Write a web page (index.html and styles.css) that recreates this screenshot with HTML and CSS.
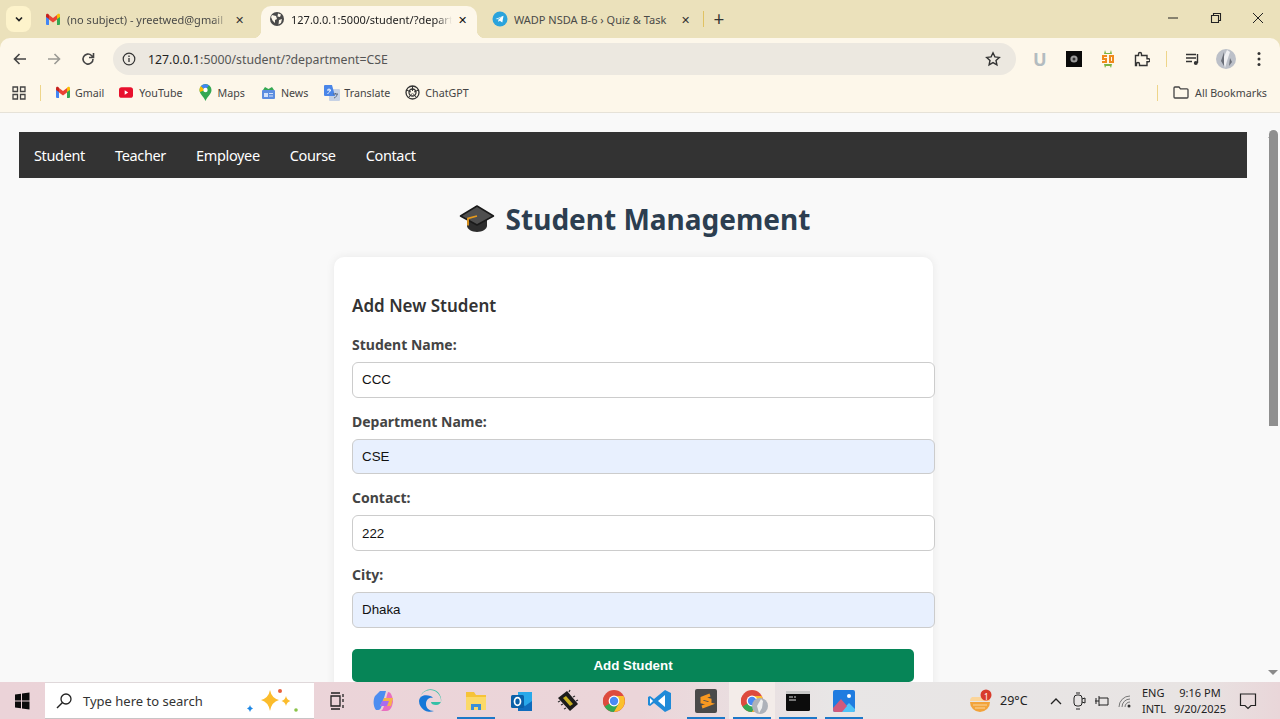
FILE: index.html
```html
<!DOCTYPE html>
<html lang="en">
<head>
<meta charset="utf-8">
<title>Student Management</title>
<link rel="stylesheet" href="styles.css">
</head>
<body>
<svg class="defs" width="0" height="0">
  <defs>
    <symbol id="gmail" viewBox="0 0 16 13">
      <path d="M1 12V3l3 2v7H2a1 1 0 0 1-1-1z" fill="#4285f4"/>
      <path d="M15 12V3l-3 2v7h2a1 1 0 0 0 1-1z" fill="#34a853"/>
      <path d="M4 6.5V2L8 5l4-3v4.5L8 9.5z" fill="#ea4335"/>
      <path d="M1 4V2.2C1 1 2.4.5 3.2 1L4 1.7V6z" fill="#c5221f"/>
      <path d="M15 4V2.2C15 1 13.6.5 12.8 1L12 1.7V6z" fill="#fbbc04"/>
    </symbol>
    <symbol id="chrome" viewBox="0 0 24 24">
      <circle cx="12" cy="12" r="11" fill="#dd4b3e"/>
      <path d="M12 12L2.5 17.5A11 11 0 0 0 12 23l5.5-9z" fill="#34a853"/>
      <path d="M12 7h9.6A11 11 0 0 1 12 23l5-9z" fill="#fbc02d"/>
      <path d="M12 12L2.5 6.5A11 11 0 0 0 2.5 17.5L7 12z" fill="#dd4b3e"/>
      <circle cx="12" cy="12" r="5.4" fill="#fff"/>
      <circle cx="12" cy="12" r="4.2" fill="#4a8af4"/>
    </symbol>
  </defs>
</svg>

<div class="tabstrip">
  <button class="tabsearch" type="button" aria-label="Search tabs">
    <svg width="10" height="10" viewBox="0 0 10 10"><path d="M2 3.500L5 6.500 8 3.500" fill="none" stroke="#222" stroke-width="1.700"/></svg>
  </button>
  <div class="tab tab-one">
    <svg class="fav" width="16" height="13"><use href="#gmail"/></svg>
    <span class="tabtitle">(no subject) - yreetwed@gmail</span>
    <span class="tabx">✕</span>
  </div>
  <div class="tab tab-active">
    <svg class="fav" width="16" height="16" viewBox="0 0 16 16"><circle cx="8" cy="8" r="7" fill="#4a4a4a"/><path d="M3 4l4 1 1 3-2 1v3L3.500 9.500 2 6zM9 2.500l3 1-1 2.500-2.500-.5zM10 9l3-1-1 4-2.500 1.500z" fill="#fdf7ea"/></svg>
    <span class="tabtitle">127.0.0.1:5000/student/?depart</span>
    <span class="tabx tabx-dark">✕</span>
  </div>
  <div class="tab tab-three">
    <svg class="fav" width="16" height="16" viewBox="0 0 16 16"><circle cx="8" cy="8" r="7.500" fill="#2aa3dc"/><path d="M3.500 8l8-3.200-1.200 6.800-2.600-1.900-1.200 1.200-.3-2.200 3.700-3-4.600 2.600z" fill="#fff"/></svg>
    <span class="tabtitle tabtitle-full">WADP NSDA B-6 › Quiz &amp; Task</span>
    <span class="tabx">✕</span>
  </div>
  <span class="tabsep"></span>
  <span class="newtab">+</span>
  <div class="winctl">
    <svg width="12" height="12" viewBox="0 0 12 12"><path d="M1 6h10" stroke="#222" stroke-width="1"/></svg>
    <svg width="12" height="12" viewBox="0 0 12 12"><path d="M1.500 3.500h7v7h-7zM3.500 3.500v-2h7v7h-2" fill="none" stroke="#222" stroke-width="1.100"/></svg>
    <svg width="12" height="12" viewBox="0 0 12 12"><path d="M1 1l10 10M11 1L1 11" stroke="#222" stroke-width="1"/></svg>
  </div>
</div>

<div class="toolbar">
  <svg class="navicon" width="16" height="16" viewBox="0 0 16 16"><path d="M14 8H3M7.500 3L2.500 8l5 5" fill="none" stroke="#444" stroke-width="1.600"/></svg>
  <svg class="navicon" width="16" height="16" viewBox="0 0 16 16"><path d="M2 8h11M8.500 3l5 5-5 5" fill="none" stroke="#9b9a94" stroke-width="1.600"/></svg>
  <svg class="navicon" width="16" height="16" viewBox="0 0 16 16"><path d="M13 8a5 5 0 1 1-1.500-3.500L13.500 6.500M13.500 2v4.500H9" fill="none" stroke="#444" stroke-width="1.600"/></svg>
  <div class="omnibox">
    <svg width="14" height="14" viewBox="0 0 14 14"><circle cx="7" cy="7" r="5.800" fill="none" stroke="#333" stroke-width="1.200"/><path d="M7 6v4M7 3.600v1.300" stroke="#333" stroke-width="1.300"/></svg>
    <span class="url"><b class="url-host">127.0.0.1</b>:5000/student/?department=CSE</span>
    <svg class="star" width="16" height="16" viewBox="0 0 16 16"><path d="M8 1.800l1.900 4.100 4.400.5-3.300 3 .9 4.400L8 11.600l-3.900 2.200.9-4.400-3.300-3 4.400-.5z" fill="none" stroke="#333" stroke-width="1.400"/></svg>
  </div>
  <div class="exts">
    <span class="ext-u">U</span>
    <svg width="16" height="16" viewBox="0 0 16 16"><rect width="16" height="16" fill="#0a0a0a"/><circle cx="8" cy="8" r="3.600" fill="#9a9a9a"/><circle cx="8" cy="8" r="1.500" fill="#333"/></svg>
    <svg width="16" height="18" viewBox="0 0 16 18"><path d="M5 0l1 3h4l1-3 1 4-8 0zM4 14h8l-1 4-1-2H6l-1 2z" fill="#7cb342"/><path d="M2 5h5v2H4v1h3v5H2v-2h3v-1H2zM9 5h5v8H9zM11 7v4h1V7z" fill="#f08a1d"/></svg>
    <svg width="16" height="16" viewBox="0 0 16 16"><path d="M2 5h3V3.500a1.500 1.500 0 0 1 3 0V5h5.500v3.200H15a1.500 1.500 0 0 1 0 3h-1.500V15H6v-1.500a1.500 1.500 0 0 0-3 0V15H2z" transform="translate(-.5 -.5)" fill="none" stroke="#333" stroke-width="1.400"/></svg>
    <span class="tool-sep"></span>
    <svg width="16" height="16" viewBox="0 0 16 16"><path d="M1 3.500h10M1 7h10M1 10.500h6M12.500 3v9" stroke="#333" stroke-width="1.400" fill="none"/><circle cx="10.800" cy="12" r="2" fill="#333"/></svg>
    <svg class="avatar" width="20" height="20" viewBox="0 0 20 20"><circle cx="10" cy="10" r="10" fill="#bcc0c8"/><path d="M11 1l-4 9 2 9 2-7 3-9z" fill="#f0f0f2"/><path d="M8 3L5 12l3 5zM14 9l-1 8 3-4z" fill="#6b6f78"/></svg>
    <svg width="4" height="16" viewBox="0 0 4 16"><circle cx="2" cy="2.500" r="1.500" fill="#333"/><circle cx="2" cy="8" r="1.500" fill="#333"/><circle cx="2" cy="13.500" r="1.500" fill="#333"/></svg>
  </div>
</div>

<div class="bookmarks">
  <svg class="apps" width="14" height="14" viewBox="0 0 14 14"><path d="M1 1h4.500v4.500H1zM8.500 1H13v4.500H8.500zM1 8.500h4.500V13H1zM8.500 8.500H13V13H8.500z" fill="none" stroke="#444" stroke-width="1.300"/></svg>
  <span class="bm-sep"></span>
  <a class="bm bm-gmail"><svg width="16" height="13"><use href="#gmail"/></svg>Gmail</a>
  <a class="bm bm-wide"><svg width="14" height="11" viewBox="0 0 16 12"><rect width="16" height="12" rx="3" fill="#e8112d"/><path d="M6.500 3.500v5L10.500 6z" fill="#fff"/></svg>YouTube</a>
  <a class="bm bm-wide"><svg width="13" height="17" viewBox="0 0 13 17"><path d="M6.500 0A6 6 0 0 1 12.500 6c0 4-4 6-6 11C4.500 12 .5 10 .5 6A6 6 0 0 1 6.500 0z" fill="#34a853"/><path d="M2 2l4 4-5 2A6 6 0 0 1 2 2z" fill="#fbbc04"/><path d="M2 2a6 6 0 0 1 8-.5L6 6z" fill="#4285f4"/><circle cx="6.500" cy="6" r="2.200" fill="#fff"/></svg>Maps</a>
  <a class="bm"><svg width="15" height="15" viewBox="0 0 15 15"><path d="M2 5l2-3 3.500 2 3.500-2 2 3z" fill="#34a853"/><rect x="1" y="5" width="13" height="9" rx="1" fill="#5c8de0"/><rect x="3" y="8" width="4" height="4" fill="#d3e2fb"/><path d="M8 8.500h4M8 11h4" stroke="#d3e2fb"/></svg>News</a>
  <a class="bm bm-tight"><svg width="16" height="16" viewBox="0 0 16 16"><rect x="5" y="4" width="11" height="12" rx="1" fill="#c7d2e4"/><path d="M0 1a1 1 0 0 1 1-1h7l3 11H1a1 1 0 0 1-1-1z" fill="#4a86e8"/><path d="M3 5h4M5 3.500V5M3.500 8.500C5 8 6 6.500 6.500 5" stroke="#fff" fill="none"/><path d="M9 9h5M11.500 8v1M10 13c2-.5 3-2.500 3.200-4" stroke="#5c6b82" fill="none"/></svg>Translate</a>
  <a class="bm"><svg width="15" height="15" viewBox="0 0 15 15"><circle cx="7.500" cy="7.500" r="6.500" fill="none" stroke="#333" stroke-width="1.300"/><circle cx="7.500" cy="7.500" r="3.500" fill="none" stroke="#333" stroke-width="1.300"/><path d="M7.500 1v5M1.500 5l4.500 2M13.500 5L9 7M3.500 12.500L7 8.500M11.500 12.500L8 8.500" stroke="#333"/></svg>ChatGPT</a>
  <span class="bm-sep bm-sep-end"></span>
  <a class="bm bm-all"><svg width="16" height="13" viewBox="0 0 16 13"><path d="M1 2a1 1 0 0 1 1-1h4l1.500 1.800H14a1 1 0 0 1 1 1V11a1 1 0 0 1-1 1H2a1 1 0 0 1-1-1z" fill="none" stroke="#444" stroke-width="1.300"/></svg>All Bookmarks</a>
</div>

<div class="viewport">
  <main class="page">
    <nav class="topnav">
      <a>Student</a><a>Teacher</a><a>Employee</a><a>Course</a><a>Contact</a>
    </nav>
    <h1 class="title">
      <svg width="36" height="28" viewBox="0 0 36 28"><path d="M8 13v8c0 3 5 6 10 6s10-3 10-6v-8z" fill="#2d2d2d"/><path d="M18 1L1.500 11 18 20l16.500-9z" fill="#4f4f4f" stroke="#1a1a1a" stroke-width="1.500" stroke-linejoin="round"/><path d="M18 11L9 13.500v7" fill="none" stroke="#e79a1c" stroke-width="1.800"/></svg>
      Student Management
    </h1>
    <form class="card">
      <h2 class="card-title">Add New Student</h2>
      <label class="field-label" for="f-name">Student Name:</label>
      <input class="field" id="f-name" type="text" value="CCC">
      <label class="field-label" for="f-dept">Department Name:</label>
      <input class="field field-auto" id="f-dept" type="text" value="CSE">
      <label class="field-label" for="f-contact">Contact:</label>
      <input class="field" id="f-contact" type="text" value="222">
      <label class="field-label" for="f-city">City:</label>
      <input class="field field-auto" id="f-city" type="text" value="Dhaka">
      <button class="submit" type="button">Add Student</button>
    </form>
  </main>
  <div class="scrollbar">
    <span class="arrow-up"></span>
    <span class="thumb"></span>
    <span class="arrow-down"></span>
  </div>
</div>

<footer class="taskbar">
  <svg class="winlogo" width="18" height="18" viewBox="0 0 18 18"><path d="M2 2.500l6-.8v6.800H2zM9 1.500L16.500.5v8H9zM2 9.500h6v6.800l-6-.8zM9 9.500h7.500v8L9 16.500z" fill="#0c0c0c"/></svg>
  <div class="searchbox">
    <svg width="18" height="18" viewBox="0 0 18 18"><circle cx="11" cy="7" r="5" fill="none" stroke="#222" stroke-width="1.300"/><path d="M7.500 10.500L2 16" stroke="#222" stroke-width="1.400"/></svg>
    <span class="search-text">Type here to search</span>
    <svg class="sparkle" width="58" height="30" viewBox="0 0 58 30"><path d="M26 4q1.500 8 9 10-7.500 2-9 11-1.500-9-9-11 7.500-2 9-10z" fill="#fbbc2c"/><path d="M42 10q.8 4 4.500 5-3.700 1-4.500 5-.8-4-4.500-5 3.700-1 4.500-5z" fill="#fbbc2c"/><path d="M6 19q.5 3 3 3.500-2.500.5-3 3.500-.5-3-3-3.500 2.500-.5 3-3.500z" fill="#1e88e5"/><circle cx="36" cy="5" r="2" fill="#e8603c"/><circle cx="52" cy="24" r="1.800" fill="#8bc34a"/></svg>
  </div>
  <div class="tasks">
    <span class="task"><svg width="18" height="18" viewBox="0 0 18 18"><path d="M2 1h9M2 17h9M2 4h9v10H2zM14 2v3M14 7v3M14 13v3" fill="none" stroke="#222" stroke-width="1.300"/></svg></span>
    <span class="task"><svg width="24" height="24" viewBox="0 0 24 24"><path d="M8 2h6l-4 14c-.7 3-2 5-4 5H4C1 17 1 11 3 7z" fill="#4c8df0"/><path d="M16 3c3 0 5 5 5 10l-1 4c-1 3-3 5-6 5H8c2 0 3-2 4-5l3-11z" fill="#e86fc0"/><path d="M8 17l4-8h9l-2 8z" fill="#f6b24a"/><path d="M10 12h7l-2 5H8z" fill="#a86cf0"/></svg></span>
    <span class="task"><svg width="24" height="24" viewBox="0 0 24 24"><path d="M12 1a11 11 0 0 1 11 11c0 2-2 4-5 4-3 0-5-1-5-3h10A10 10 0 0 0 2 9a11 11 0 0 1 10-8z" fill="#33c0a6"/><path d="M1 12a11 11 0 0 0 15 10c-5 0-8-3-8-7 0-4 3-7 7-6-2-3-13-5-14 3z" fill="#1678d8"/></svg></span>
    <span class="task task-open"><svg width="22" height="22" viewBox="0 0 22 22"><path d="M1 2h8l2 3h10v15H1z" fill="#f6c338"/><path d="M1 7h20v13H1z" fill="#fbd968"/><path d="M6 20v-6h10v6h-3v-3H9v3z" fill="#3a8fd8"/></svg></span>
    <span class="task"><svg width="24" height="24" viewBox="0 0 24 24"><path d="M8 3h14v14H8z" fill="#28a8ea"/><path d="M8 12l7 5 7-5v10H8z" fill="#0f6cbd"/><rect x="1" y="6" width="13" height="13" rx="1.500" fill="#0a5fa8"/><ellipse cx="7.500" cy="12.500" rx="3" ry="3.800" fill="none" stroke="#fff" stroke-width="1.700"/></svg></span>
    <span class="task"><svg width="24" height="24" viewBox="0 0 24 24"><path d="M2 9L11 2l11 13-8 7z" fill="#1c1c1c"/><path d="M7 9l3-2 7 8-3 2z" fill="#c8b020"/><path d="M4 12l-2 1M7 15l-2 1M10 19l-2 1M13 3l1-2M17 8l2-1M20 12l2-1" stroke="#333" stroke-width="1.300"/></svg></span>
    <span class="task"><svg width="24" height="24"><use href="#chrome"/></svg></span>
    <span class="task"><svg width="24" height="24" viewBox="0 0 24 24"><path d="M17 1l6 3v16l-6 3-11-9-4 3-2-1V8l2-1 4 3z" fill="#1f8ad8"/><path d="M17 6v12l-7-6z" fill="#fff"/><path d="M2 9l3 3-3 3z" fill="#fff"/></svg></span>
    <span class="task task-open"><svg width="22" height="24" viewBox="0 0 22 24"><rect width="22" height="24" rx="2" fill="#4a4a4a"/><path d="M15 6L7 9v4l8 2-8 3 8-3v-4L7 9" fill="none" stroke="#f89820" stroke-width="3"/></svg></span>
    <span class="task task-open task-current"><svg width="24" height="24"><use href="#chrome"/></svg><svg class="overlay" width="16" height="18" viewBox="0 0 16 18"><circle cx="8" cy="9" r="8" fill="#aeb2ba"/><path d="M9 2L5 9l2 7 3-5 1-7z" fill="#eee"/></svg></span>
    <span class="task task-open"><svg width="24" height="20" viewBox="0 0 24 20"><rect width="24" height="20" rx="1.500" fill="#0c0c0c"/><rect width="24" height="3" fill="#c8c8c8"/><path d="M3 6h4M8 6h2M3 9h7" stroke="#ddd"/></svg></span>
    <span class="task task-open"><svg width="22" height="22" viewBox="0 0 22 22"><rect width="22" height="22" rx="2" fill="#1f7ce0"/><path d="M0 20l8-10 5 6 3-3 6 6v1a2 2 0 0 1-2 2H2z" fill="#4fc3f7"/><path d="M0 18l8-9 6 7-5 6H2a2 2 0 0 1-2-2z" fill="#d05a7c"/><circle cx="16" cy="6" r="2" fill="#fff"/></svg></span>
  </div>
  <div class="tray">
    <svg class="weather" width="24" height="24" viewBox="0 0 24 24"><path d="M1 13h20a10 10 0 0 1-20 0z" fill="#f2a33a"/><path d="M3 8h14a4 4 0 0 1 4 4H1a4 4 0 0 1 2-4z" fill="#fbd59a"/><path d="M4 16h14M6 19h10" stroke="#fbd59a"/><circle cx="17" cy="6" r="5.500" fill="#d83b2b"/></svg>
    <span class="badge-num">1</span>
    <span class="temp">29°C</span>
    <svg class="tray-caret" width="14" height="14" viewBox="0 0 14 14"><path d="M2 10l5-5 5 5" fill="none" stroke="#222" stroke-width="1.300"/></svg>
    <svg class="tray-i tray-cam" width="14" height="18" viewBox="0 0 14 18"><rect x="2" y="3" width="8" height="11" rx="3" fill="none" stroke="#222"/><path d="M4 1h4M4 17h4M10 7l3-1v5l-3-1" fill="none" stroke="#222"/></svg>
    <svg class="tray-i tray-pow" width="16" height="14" viewBox="0 0 16 14"><path d="M5 4h9v7H5M5 2v10M5 7H1M2 4v6" fill="none" stroke="#222"/></svg>
    <svg class="tray-i tray-wifi" width="16" height="14" viewBox="0 0 16 14"><path d="M2 13a11 11 0 0 1 11-11M5 13a8 8 0 0 1 8-8M8 13a5 5 0 0 1 5-5" fill="none" stroke="#777"/><circle cx="12" cy="12" r="1.500" fill="#333"/></svg>
    <span class="lang">ENG<br>INTL</span>
    <span class="clock">9:16 PM<br>9/20/2025</span>
    <svg class="notif" width="18" height="18" viewBox="0 0 18 18"><path d="M1.500 2h15v11.500H12l-3 3-3-3H1.500z" fill="none" stroke="#222" stroke-width="1.200"/></svg>
  </div>
</footer>
</body>
</html>
```

FILE: styles.css
```css
* { box-sizing: border-box; }
html, body { height: 100%; }
body {
  margin: 0;
  height: 719px;
  overflow: hidden;
  display: flex;
  flex-direction: column;
  font-family: "Noto Sans", "Open Sans", sans-serif;
  background: #ebe1bb;
  color: #333;
}
.defs { position: absolute; }

/* Tab strip */
.tabstrip {
  height: 38px;
  flex: none;
  display: flex;
  align-items: flex-end;
  background: #ebe1bb;
  padding-left: 6px;
  font-size: 11px;
  color: #4a4a48;
}
.tabsearch {
  width: 25px;
  height: 26px;
  margin-bottom: 6px;
  padding: 0;
  border: 0;
  border-radius: 8px;
  background: #fdf3cb;
  display: flex;
  align-items: center;
  justify-content: center;
}
.tab {
  height: 32px;
  display: flex;
  align-items: center;
  padding-bottom: 6px;
}
.tab-one { width: 230px; padding-left: 14px; padding-right: 17px; }
.tab-active {
  position: relative;
  width: 216px;
  padding-left: 8px;
  padding-right: 10px;
  background: #fdf7ea;
  border-radius: 10px 10px 0 0;
  color: #222;
  margin-right: 7px;
}
.tab-active::before,
.tab-active::after {
  content: "";
  position: absolute;
  bottom: 0;
  width: 8px;
  height: 8px;
}
.tab-active::before { left: -8px; background: radial-gradient(circle at 0 0, transparent 8px, #fdf7ea 8.500px); }
.tab-active::after { right: -8px; background: radial-gradient(circle at 100% 0, transparent 8px, #fdf7ea 8.500px); }
.tab-three { width: 214px; padding-left: 8px; padding-right: 8px; }
.fav { flex: none; margin-right: 6px; }
.tabtitle {
  flex: 1;
  min-width: 0;
  white-space: nowrap;
  overflow: hidden;
  -webkit-mask-image: linear-gradient(to right, #000 90%, transparent);
  mask-image: linear-gradient(to right, #000 90%, transparent);
}
.tabtitle-full { -webkit-mask-image: none; mask-image: none; }
.tabx { flex: none; margin-left: 6px; font-size: 11px; color: #333; }
.tabx-dark { color: #111; }
.tabsep { width: 1px; height: 16px; margin: 0 0 11px 5px; background: #e0c263; }
.newtab { width: 30px; text-align: center; font-size: 19px; line-height: 24px; margin-bottom: 7px; color: #333; }
.winctl {
  margin-left: auto;
  width: 97px;
  height: 36px;
  align-self: flex-start;
  display: flex;
  align-items: center;
  justify-content: space-between;
  margin-right: 16px;
}

/* Toolbar */
.toolbar {
  height: 38px;
  flex: none;
  display: flex;
  align-items: center;
  background: #fdf7ea;
  padding-left: 12px;
  padding-top: 4px;
  border-radius: 10px 10px 0 0;
}
.navicon { margin-right: 18px; flex: none; }
.navicon:nth-child(3) { margin-right: 17px; }
.omnibox {
  width: 903px;
  height: 32px;
  flex: none;
  background: #ece8e0;
  border-radius: 16px;
  display: flex;
  align-items: center;
  padding: 0 15px 0 9px;
  font-size: 12.300px;
  color: #555;
}
.url { margin-left: 12px; flex: 1; }
.url-host { font-weight: 400; color: #222; }
.star { flex: none; }
.exts {
  display: flex;
  align-items: center;
  margin-left: 17px;
  width: 236px;
  gap: 18px;
}
.ext-u { font-size: 18px; font-weight: 700; color: #b3bcc0; width: 15px; }
.tool-sep { width: 1px; height: 16px; margin-left: -2px; background: #eed58a; }
.avatar { margin: 0 3px 0 -3px; }

/* Bookmarks */
.bookmarks {
  height: 37px;
  flex: none;
  display: flex;
  align-items: center;
  background: #fdf7ea;
  border-bottom: 1px solid #e6e2d8;
  padding: 0 13px 3px 12px;
  font-size: 10.700px;
  color: #444;
}
.apps { flex: none; }
.bm-sep { width: 1px; height: 16px; margin: 0 14px; background: #eed58a; }
.bm-sep-end { margin: 0 15px 0 auto; }
.bm { display: flex; align-items: center; gap: 5px; margin-right: 16px; white-space: nowrap; }
.bm-gmail { gap: 4px; margin-right: 15px; }
.bm-wide { gap: 6px; }
.bm-tight { gap: 4px; margin-right: 15px; }
.bm-all { margin-right: 0; gap: 6px; }

/* Page */
.viewport {
  height: 569px;
  flex: none;
  display: flex;
  overflow: hidden;
  background: #f9f9f9;
}
.page {
  flex: 1;
  min-width: 0;
  padding: 19px 17px 0 19px;
}
.topnav {
  height: 46px;
  background: #333;
  display: flex;
  align-items: center;
  padding-left: 15px;
  gap: 30px;
  font-size: 14.500px;
  letter-spacing: -.35px;
  color: #fff;
}
.title {
  margin: 21px 0 0;
  height: 40px;
  display: flex;
  align-items: center;
  justify-content: center;
  gap: 11px;
  padding-left: 3px;
  font-size: 28px;
  font-weight: 700;
  color: #2c3e50;
}
.card {
  width: 599px;
  height: 460px;
  margin: 18px 0 0 315px;
  padding: 36px 18px;
  background: #fff;
  border-radius: 10px;
  box-shadow: 0 0 10px rgba(0, 0, 0, .07);
}
.card-title {
  margin: 0 0 16px;
  font-size: 17px;
  line-height: 26px;
  font-weight: 600;
  color: #333;
}
.field-label {
  display: block;
  font-size: 14px;
  font-weight: 700;
  line-height: 20px;
  margin-bottom: 7px;
  color: #444;
}
.field {
  display: block;
  width: 583px;
  height: 35.500px;
  padding: 0 9px;
  margin-bottom: 14.200px;
  border: 1px solid #ccc;
  border-radius: 6px;
  background: #fff;
  font-family: "Liberation Sans", Arial, sans-serif;
  font-size: 13.333px;
  color: #111;
}
.field-auto { background: #e8f0fe; }
.submit {
  display: block;
  width: 562px;
  height: 33px;
  margin-top: 21px;
  border: 0;
  border-radius: 5px;
  background: #068557;
  color: #fff;
  font-family: "Liberation Sans", Arial, sans-serif;
  font-size: 13.333px;
  font-weight: 700;
}
.scrollbar {
  width: 16px;
  flex: none;
  background: #f9f9f9;
  display: flex;
  flex-direction: column;
  align-items: center;
}
.arrow-up, .arrow-down {
  width: 0;
  height: 0;
  margin-left: 2px;
  border-left: 5px solid transparent;
  border-right: 5px solid transparent;
}
.arrow-up { margin-top: 20px; border-bottom: 5px solid #8a8a8a; }
.arrow-down { margin-top: auto; margin-bottom: 7px; border-top: 5px solid #8a8a8a; }
.thumb {
  width: 9px;
  height: 296px;
  margin: -8px 0 0 2px;
  background: #8f8f8f;
  border-radius: 5px 5px 0 0;
}

/* Taskbar */
.taskbar {
  height: 37px;
  flex: none;
  display: flex;
  align-items: center;
  background: linear-gradient(to right, #ebd3d8 0, #ebd5d9 50%, #e8e6e6 65%, #e8e4e3 93%, #e9d6d9 100%);
  color: #222;
}
.winlogo { flex: none; margin: 0 14px 0 13px; }
.searchbox {
  width: 269px;
  height: 37px;
  flex: none;
  background: #fff;
  display: flex;
  align-items: center;
  padding-left: 10px;
  font-size: 13px;
  color: #333;
  border-top: 1px solid #dfd8da;
  border-bottom: 1px solid #c8c4c6;
}
.search-text { margin-left: 10px; flex: 1; }
.sparkle { margin-right: 12px; }
.tasks { display: flex; margin-left: 1px; flex: none; }
.task {
  position: relative;
  width: 46px;
  height: 37px;
  display: flex;
  align-items: center;
  justify-content: center;
}
.task-open::after {
  content: "";
  position: absolute;
  left: 4px;
  right: 4px;
  bottom: 0;
  height: 2px;
  background: #1d78c8;
}
.task-current { background: #f3ece9; }
.overlay { position: absolute; left: 23px; top: 15px; }
.tray { flex: 1; position: relative; display: flex; align-items: center; padding-left: 102px; font-size: 12px; }
.weather { flex: none; }
.badge-num { position: absolute; left: 117px; top: 6px; font-size: 8px; color: #fff; }
.temp { margin-left: 7px; font-size: 12.500px; width: 49px; flex: none; }
.tray-caret { flex: none; }
.tray-i { flex: none; }
.tray-cam { margin-left: 9px; }
.tray-pow { margin-left: 8px; }
.tray-wifi { margin-left: 7px; }
.lang { margin-left: 9px; line-height: 16px; width: 30px; font-size: 11px; flex: none; }
.clock { line-height: 16px; text-align: center; width: 56px; font-size: 11px; flex: none; }
.notif { margin-left: 11px; flex: none; }
```
